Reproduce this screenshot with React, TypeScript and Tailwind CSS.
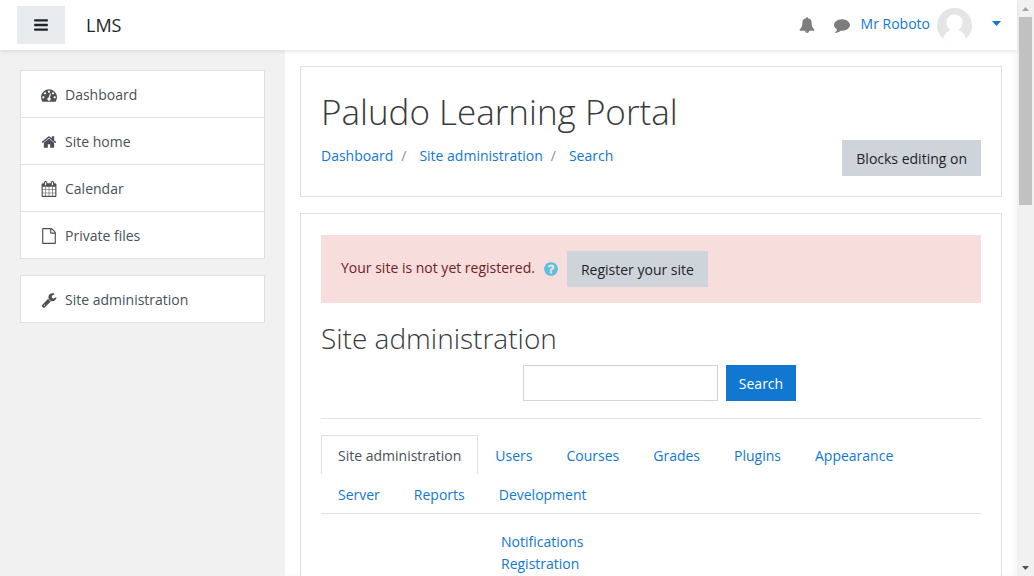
import React, { useState } from 'react';

const icons = {
  bars: 'M1664 1344v128q0 26-19 45t-45 19h-1408q-26 0-45-19t-19-45v-128q0-26 19-45t45-19h1408q26 0 45 19t19 45zm0-512v128q0 26-19 45t-45 19h-1408q-26 0-45-19t-19-45v-128q0-26 19-45t45-19h1408q26 0 45 19t19 45zm0-512v128q0 26-19 45t-45 19h-1408q-26 0-45-19t-19-45v-128q0-26 19-45t45-19h1408q26 0 45 19t19 45z',
  home: 'M1472 992v480q0 26-19 45t-45 19h-384v-384h-256v384h-384q-26 0-45-19t-19-45v-480q0-1 .5-3t.5-3l575-474 575 474q1 2 1 6zm223-69l-62 74q-8 9-21 11h-3q-13 0-21-7l-692-577-692 577q-12 8-24 7-13-2-21-11l-62-74q-8-10-7-23.5t11-21.5l719-599q32-26 76-26t76 26l244 204v-195q0-14 9-23t23-9h192q14 0 23 9t9 23v408l219 182q10 8 11 21.5t-7 23.5z',
  calendar: 'M192 1664h288v-288h-288v288zm352 0h320v-288h-320v288zm-352-352h288v-320h-288v320zm352 0h320v-320h-320v320zm-352-384h288v-288h-288v288zm736 736h320v-288h-320v288zm-384-736h320v-288h-320v288zm768 736h288v-288h-288v288zm-384-352h320v-320h-320v320zm-352-864v-288q0-13-9.5-22.5t-22.5-9.5h-64q-13 0-22.5 9.5t-9.5 22.5v288q0 13 9.5 22.5t22.5 9.5h64q13 0 22.5-9.5t9.5-22.5zm736 864h288v-320h-288v320zm-384-384h320v-288h-320v288zm384 0h288v-288h-288v288zm32-480v-288q0-13-9.5-22.5t-22.5-9.5h-64q-13 0-22.5 9.5t-9.5 22.5v288q0 13 9.5 22.5t22.5 9.5h64q13 0 22.5-9.5t9.5-22.5zm384-64v1280q0 52-38 90t-90 38h-1408q-52 0-90-38t-38-90v-1280q0-52 38-90t90-38h128v-96q0-66 47-113t113-47h64q66 0 113 47t47 113v96h384v-96q0-66 47-113t113-47h64q66 0 113 47t47 113v96h128q52 0 90 38t38 90z',
  file: 'M1596 380q28 28 48 76t20 88v1152q0 40-28 68t-68 28h-1344q-40 0-68-28t-28-68v-1600q0-40 28-68t68-28h896q40 0 88 20t76 48zm-444-244v376h376q-10-29-22-41l-313-313q-12-12-41-22zm384 1528v-1024h-416q-40 0-68-28t-28-68v-416h-768v1536h1280z',
  wrench: 'M448 1472q0-26-19-45t-45-19-45 19-19 45 19 45 45 19 45-19 19-45zm644-420l-682 682q-37 37-90 37-52 0-91-37l-106-108q-38-36-38-90 0-53 38-91l681-681q39 98 114.500 173.500t173.500 114.500zm634-435q0 39-23 106-47 134-164.500 217.500t-258.500 83.500q-185 0-316.500-131.500t-131.500-316.500 131.500-316.500 316.500-131.500q58 0 121.500 16.500t107.500 46.500q16 11 16 28t-16 28l-293 169v224l193 107q5-3 79-48.500t135.500-81 70.500-35.500q15 0 23.500 10t8.500 25z',
  dashboard: 'M384 1152q0-53-37.500-90.500t-90.500-37.500-90.500 37.500-37.500 90.500 37.500 90.500 90.500 37.500 90.500-37.500 37.500-90.500zm192-448q0-53-37.500-90.500t-90.500-37.500-90.500 37.500-37.500 90.500 37.500 90.500 90.500 37.500 90.500-37.500 37.500-90.500zm428 481l101-382q6-26-7.500-48.500t-38.500-29.500-48 6.500-30 39.500l-101 382q-60 5-107 43.500t-63 98.500q-20 77 20 146t117 89 146-20 89-117q16-60-6-117t-72-91zm660-33q0-53-37.500-90.500t-90.500-37.500-90.500 37.500-37.500 90.500 37.500 90.500 90.500 37.500 90.500-37.500 37.500-90.500zm-640-640q0-53-37.500-90.500t-90.500-37.500-90.500 37.500-37.500 90.500 37.500 90.500 90.500 37.500 90.500-37.500 37.500-90.500zm448 192q0-53-37.500-90.500t-90.500-37.500-90.500 37.500-37.500 90.500 37.500 90.500 90.500 37.500 90.500-37.500 37.500-90.500zm320 448q0 261-141 483-19 29-54 29h-1402q-35 0-54-29-141-221-141-483 0-182 71-348t191-286 286-191 348-71 348 71 286 191 191 286 71 348z',
  bell: 'M912 1696q0-16-16-16-59 0-101.500-42.500t-42.500-101.500q0-16-16-16t-16 16q0 73 51.500 124.500t124.500 51.500q16 0 16-16zm816-288q0 52-38 90t-90 38h-448q0 106-75 181t-181 75-181-75-75-181h-448q-52 0-90-38t-38-90q50-42 91-88t85-119.500 74.500-158.500 50-206 19.500-260q0-152 117-282.500t307-158.500q-8-19-8-39 0-40 28-68t68-28 68 28 28 68q0 20-8 39 190 28 307 158.500t117 282.500q0 139 19.500 260t50 206 74.500 158.500 85 119.500 91 88z',
  comment: 'M1792 896q0 174-120 321.500t-326 233-450 85.500q-70 0-145-8-198 175-460 242-49 14-114 22-17 2-30.500-9t-17.500-29v-1q-3-4-.5-12t2-10 4.500-9.500l6-9 7-8.500 8-9q7-8 31-34.500t34.500-38 31-39.500 32.500-51 27-59 26-76q-157-89-247.500-220t-90.500-281q0-130 71-248.500t191-204.500 286-136.500 348-50.500q244 0 450 85.500t326 233 120 321.500z',
  question: 'M1024 1376v-192q0-14-9-23t-23-9h-192q-14 0-23 9t-9 23v192q0 14 9 23t23 9h192q14 0 23-9t9-23zm256-672q0-88-55.500-163t-138.500-116-170-41q-243 0-371 213-15 24 8 42l132 100q7 6 19 6 16 0 25-12 53-68 86-92 34-24 86-24 48 0 85.500 26t37.500 59q0 38-20 61t-68 45q-63 28-115.500 86.500t-52.500 125.500v36q0 14 9 23t23 9h192q14 0 23-9t9-23q0-19 21.500-49.500t54.500-49.500q32-18 49-28.500t46-35 44.500-48 28-60.500 12.500-81zm384 192q0 209-103 385.500t-279.500 279.500-385.500 103-385.500-103-279.500-279.500-103-385.500 103-385.500 279.500-279.500 385.500-103 385.500 103 279.500 279.500 103 385.500z',
};

type IconName = keyof typeof icons;

function Icon({ name, className = 'size-4' }: { name: IconName; className?: string }) {
  return (
    <svg viewBox="0 0 1792 1792" fill="currentColor" aria-hidden="true" className={`shrink-0 ${className}`}>
      <path d={icons[name]} />
    </svg>
  );
}

function Avatar() {
  return (
    <svg viewBox="0 0 35 35" aria-hidden="true" className="size-[35px] shrink-0">
      <clipPath id="avatar-clip">
        <circle cx="17.500" cy="17.500" r="17.500" />
      </clipPath>
      <g clipPath="url(#avatar-clip)">
        <rect width="35" height="35" fill="#e5e5e5" />
        <path d="M5.500 35C6 27 9.500 23.500 13.500 22C10.800 20 9.500 17.600 9.500 14.600C9.500 9.800 13 6.600 17.500 6.600S25.500 9.800 25.500 14.600C25.500 17.600 24.200 20 21.500 22C25.500 23.500 29 27 29.500 35Z" fill="#fff" />
      </g>
    </svg>
  );
}

const mainNav: { icon: IconName; label: string }[] = [
  { icon: 'dashboard', label: 'Dashboard' },
  { icon: 'home', label: 'Site home' },
  { icon: 'calendar', label: 'Calendar' },
  { icon: 'file', label: 'Private files' },
];

const adminNav: { icon: IconName; label: string }[] = [{ icon: 'wrench', label: 'Site administration' }];

function NavGroup({ items, label }: { items: { icon: IconName; label: string }[]; label: string }) {
  return (
    <nav aria-label={label}>
      <ul className="divide-y divide-[#dfdfdf] border border-[#dfdfdf] bg-white">
        {items.map((item) => (
          <li key={item.label}>
            <a href="#" className="flex h-[46px] items-center gap-2 px-5 pt-0.5 text-[#495057]">
              <Icon name={item.icon} />
              {item.label}
            </a>
          </li>
        ))}
      </ul>
    </nav>
  );
}

const crumbs = ['Dashboard', 'Site administration', 'Search'];
const tabs = ['Site administration', 'Users', 'Courses', 'Grades', 'Plugins', 'Appearance', 'Server', 'Reports', 'Development'];

function ScrollBar() {
  return (
    <div aria-hidden="true" className="flex w-[17px] shrink-0 flex-col items-center bg-[#f1f1f1]">
      <div className="flex h-[17px] items-center">
        <svg viewBox="0 0 7 4" className="h-1 w-[7px]" fill="#a3a3a3"><path d="M0 4L3.500 0L7 4Z" /></svg>
      </div>
      <div className="h-[188px] w-[13px] bg-[#c1c1c1]" />
      <div className="mt-auto flex h-[17px] items-center">
        <svg viewBox="0 0 7 4" className="h-1 w-[7px]" fill="#505050"><path d="M0 0L3.500 4L7 0Z" /></svg>
      </div>
    </div>
  );
}

export default function App() {
  const [active, setActive] = useState(tabs[0]);
  const [query, setQuery] = useState('');

  return (
    <div className="flex h-screen overflow-hidden bg-white font-['Segoe_UI','Open_Sans',sans-serif] text-sm leading-[22px] text-[#373a3c]">
      <div className="flex min-w-0 flex-1 flex-col">
        <header className="z-10 flex h-[50px] shrink-0 items-center bg-white pr-4 pl-[17px] shadow-[0_2px_4px_rgba(0,0,0,0.08)]">
          <button type="button" aria-label="Side panel" className="flex h-[38px] w-12 items-center justify-center bg-[#e9ecef] text-[#212529]">
            <Icon name="bars" />
          </button>
          <a href="#" className="ml-[21px] text-lg text-[#212529]">LMS</a>
          <div className="ml-auto flex items-center">
            <button type="button" aria-label="Notifications" className="mr-[19px] text-[#7d7d7d]"><Icon name="bell" /></button>
            <button type="button" aria-label="Messages" className="mr-[11px] text-[#7d7d7d]"><Icon name="comment" /></button>
            <button type="button" className="flex items-center text-[#1177d1]">
              <span className="mr-[7px] pb-0.5">Mr Roboto</span>
              <Avatar />
              <svg viewBox="0 0 9 5" aria-hidden="true" className="mb-1 ml-5 h-[5px] w-[9px]" fill="currentColor"><path d="M0 0H9L4.500 5Z" /></svg>
            </button>
          </div>
        </header>

        <div className="flex min-h-0 flex-1">
          <aside className="flex w-[285px] shrink-0 flex-col gap-4 bg-[#f1f1f1] p-5">
            <NavGroup items={mainNav} label="Main" />
            <NavGroup items={adminNav} label="Administration" />
          </aside>

          <main className="flex min-w-0 flex-1 flex-col gap-4 overflow-hidden px-[15px] pt-4 shadow-[inset_-4px_0_4px_rgba(0,0,0,0.03)]">
            <section className="shrink-0 border border-[#dfdfdf] bg-white p-5">
              <h1 className="mt-1 text-[35px] leading-[42px] font-light">Paludo Learning Portal</h1>
              <div className="mt-[7px] flex items-start justify-between">
                <nav aria-label="Breadcrumb" className="pt-[5px]">
                  <ol className="flex">
                    {crumbs.map((crumb, i) => (
                      <li key={crumb}>
                        {i > 0 && <span className="mr-[13px] ml-2 text-[#868e96]">/</span>}
                        <a href="#" className="text-[#1177d1]">{crumb}</a>
                      </li>
                    ))}
                  </ol>
                </nav>
                <button type="button" className="h-9 bg-[#ced4da] px-3.5 pt-0.5 text-[#212529]">Blocks editing on</button>
              </div>
            </section>

            <section className="min-h-0 flex-1 border border-b-0 border-[#dfdfdf] bg-white px-5 pt-[21px]">
              <div role="alert" className="flex items-center bg-[#f7dddc] px-5 py-4 text-[#6e211e]">
                <span className="pb-0.5">Your site is not yet registered.</span>
                <button type="button" aria-label="Help with registration" className="mx-2 text-[#5bc0de]"><Icon name="question" /></button>
                <button type="button" className="h-9 bg-[#ced4da] px-3.5 pt-0.5 text-[#212529]">Register your site</button>
              </div>

              <h2 className="mt-[17px] text-[28px] leading-9 font-light">Site administration</h2>

              <form className="mt-[9px] flex justify-center gap-2 pl-[17px]" onSubmit={(e) => e.preventDefault()}>
                <input type="text" aria-label="Search in settings" value={query} onChange={(e) => setQuery(e.target.value)} className="h-9 w-[195px] border border-[#ced4da] bg-white px-3 outline-none" />
                <button type="submit" className="h-9 bg-[#1177d1] px-[13px] pt-0.5 text-white">Search</button>
              </form>

              <hr className="mt-[17px] mb-4 border-[#e3e3e3]" />

              <div role="tablist" className="flex flex-wrap border-b border-[#dee2e6]">
                {tabs.map((tab) => (
                  <button
                    key={tab}
                    type="button"
                    role="tab"
                    aria-selected={active === tab}
                    onClick={() => setActive(tab)}
                    className={active === tab
                      ? 'h-[39px] border border-b-0 border-[#dee2e6] px-4 pt-0.5 text-[#495057]'
                      : 'h-[39px] px-[17px] pt-[3px] text-[#1177d1]'}
                  >
                    {tab}
                  </button>
                ))}
              </div>

              <div className="flex pt-[17px]">
                <div className="w-1/4" />
                <ul className="pl-[15px]">
                  <li><a href="#" className="text-[#1177d1]">Notifications</a></li>
                  <li><a href="#" className="text-[#1177d1]">Registration</a></li>
                </ul>
              </div>
            </section>
          </main>
        </div>
      </div>
      <ScrollBar />
    </div>
  );
}
